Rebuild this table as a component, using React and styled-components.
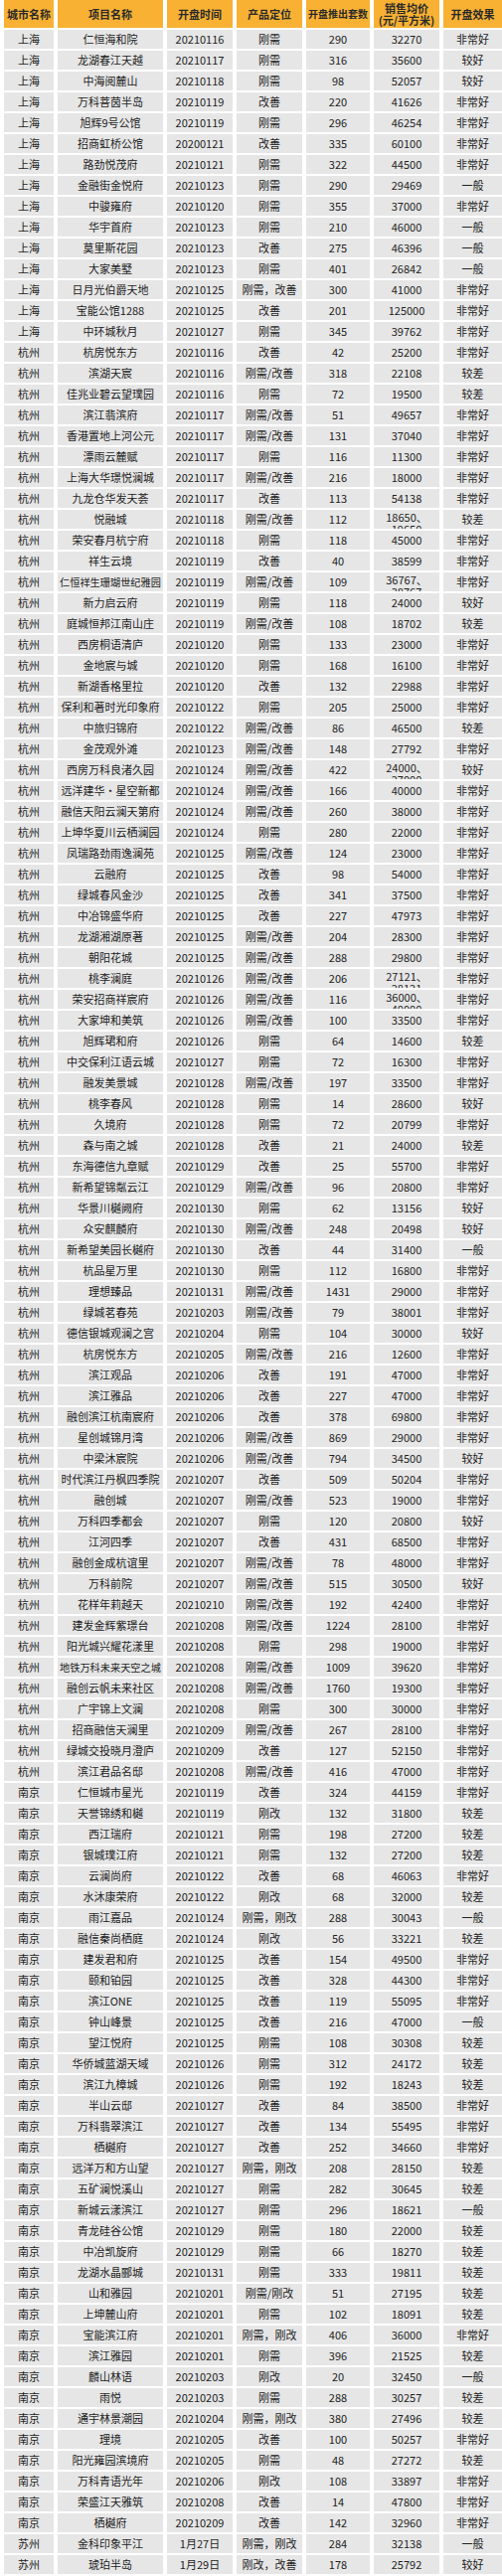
import React from 'react'
import styled, { createGlobalStyle } from 'styled-components'

const GlobalStyle = createGlobalStyle`
  html, body {
    margin: 0;
    padding: 0;
    background: #ffffff;
  }
  body {
    font-family: "Noto Sans CJK SC", "Noto Sans", sans-serif;
    color: #222;
  }
`

const COLS = '50px 106px 66px 66px 64px 66px 59px'

const Table = styled.div`
  width: 505px;
  display: flex;
  flex-direction: column;
`

const HeaderRow = styled.div`
  display: grid;
  grid-template-columns: ${COLS};
  column-gap: 4px;
  padding-left: 4px;
  height: 28px;
  margin-bottom: 2px;
`

const HeadCell = styled.div`
  background: #f8b133;
  display: flex;
  align-items: center;
  justify-content: center;
  text-align: center;
  font-size: ${({ $small }) => ($small ? '10px' : '11px')};
  line-height: 12px;
  font-weight: 700;
  color: #2a2a2a;
  white-space: nowrap;
  overflow: hidden;
`

const Row = styled.div`
  display: grid;
  grid-template-columns: ${COLS};
  column-gap: 4px;
  padding-left: 4px;
  height: 19px;
  margin-bottom: 2px;
`

const Cell = styled.div`
  background: #e6e6e6;
  display: flex;
  align-items: ${({ $wrap }) => ($wrap ? 'flex-start' : 'center')};
  justify-content: center;
  text-align: center;
  font-size: ${({ $tight }) => ($tight ? '10.2px' : '11px')};
  line-height: ${({ $wrap }) => ($wrap ? '12px' : '19px')};
  padding-top: ${({ $wrap }) => ($wrap ? '1px' : '0')};
  box-sizing: border-box;
  color: #222;
  white-space: nowrap;
  overflow: hidden;
`

const Lines = styled.span`
  display: block;
`

const raw = `上海,仁恒海和院,20210116,刚需,290,32270,非常好
上海,龙湖春江天越,20210117,刚需,316,35600,较好
上海,中海阅麓山,20210118,刚需,98,52057,较好
上海,万科菩茵半岛,20210119,改善,220,41626,非常好
上海,旭辉9号公馆,20210119,刚需,296,46254,非常好
上海,招商虹桥公馆,20200121,改善,335,60100,非常好
上海,路劲悦茂府,20210121,刚需,322,44500,非常好
上海,金融街金悦府,20210123,刚需,290,29469,一般
上海,中骏雍府,20210120,刚需,355,37000,非常好
上海,华宇首府,20210123,刚需,210,46000,一般
上海,莫里斯花园,20210123,改善,275,46396,一般
上海,大家美墅,20210123,刚需,401,26842,一般
上海,日月光伯爵天地,20210125,刚需，改善,300,41000,非常好
上海,宝能公馆1288,20210125,改善,201,125000,非常好
上海,中环城秋月,20210127,刚需,345,39762,非常好
杭州,杭房悦东方,20210116,改善,42,25200,非常好
杭州,滨湖天宸,20210116,刚需/改善,318,22108,较差
杭州,佳兆业碧云望璞园,20210116,刚需,72,19500,较差
杭州,滨江翡滨府,20210117,刚需/改善,51,49657,非常好
杭州,香港置地上河公元,20210117,刚需/改善,131,37040,非常好
杭州,漂雨云麓赋,20210117,刚需,116,11300,非常好
杭州,上海大华璟悦澜城,20210117,刚需/改善,216,18000,非常好
杭州,九龙仓华发天荟,20210117,改善,113,54138,非常好
杭州,悦融城,20210118,刚需/改善,112,18650、|19650,较差
杭州,荣安春月杭宁府,20210118,刚需,118,45000,非常好
杭州,祥生云境,20210119,改善,40,38599,非常好
杭州,仁恒祥生珊瑚世纪雅园,20210119,刚需/改善,109,36767、|38767,非常好
杭州,新力启云府,20210119,刚需,118,24000,较好
杭州,庭城恒邦江南山庄,20210119,刚需/改善,108,18702,较差
杭州,西房桐语清庐,20210120,刚需,133,23000,非常好
杭州,金地宸与城,20210120,刚需,168,16100,非常好
杭州,新湖香格里拉,20210120,改善,132,22988,非常好
杭州,保利和著时光印象府,20210122,刚需,205,25000,非常好
杭州,中旅归锦府,20210122,刚需/改善,86,46500,较差
杭州,金茂观外滩,20210123,刚需/改善,148,27792,非常好
杭州,西房万科良渚久园,20210124,刚需/改善,422,24000、|27000,较好
杭州,远洋建华·星空新都,20210124,刚需/改善,166,40000,非常好
杭州,融信天阳云澜天第府,20210124,刚需/改善,260,38000,非常好
杭州,上坤华夏川云栖澜园,20210124,刚需,280,22000,非常好
杭州,凤瑞路劲雨逸澜苑,20210125,刚需/改善,124,23000,非常好
杭州,云融府,20210125,改善,98,54000,非常好
杭州,绿城春风金沙,20210125,改善,341,37500,非常好
杭州,中冶锦盛华府,20210125,改善,227,47973,非常好
杭州,龙湖湘湖原著,20210125,刚需/改善,204,28300,非常好
杭州,朝阳花城,20210125,刚需/改善,288,29800,非常好
杭州,桃李澜庭,20210126,刚需/改善,206,27121、|28121,非常好
杭州,荣安招商祥宸府,20210126,刚需/改善,116,36000、|40000,非常好
杭州,大家坤和美筑,20210126,刚需/改善,100,33500,非常好
杭州,旭辉珺和府,20210126,刚需,64,14600,较差
杭州,中交保利江语云城,20210127,刚需,72,16300,非常好
杭州,融发美景城,20210128,刚需/改善,197,33500,非常好
杭州,桃李春风,20210128,刚需,14,28600,较好
杭州,久境府,20210128,刚需,72,20799,非常好
杭州,森与南之城,20210128,改善,21,24000,较差
杭州,东海德信九章赋,20210129,改善,25,55700,非常好
杭州,新希望锦粼云江,20210129,刚需/改善,96,20800,非常好
杭州,华景川樾阙府,20210130,刚需,62,13156,较好
杭州,众安麒麟府,20210130,刚需/改善,248,20498,较好
杭州,新希望美园长樾府,20210130,改善,44,31400,一般
杭州,杭品星万里,20210130,刚需,112,16800,非常好
杭州,理想臻品,20210131,刚需/改善,1431,29000,非常好
杭州,绿城茗春苑,20210203,刚需/改善,79,38001,非常好
杭州,德信银城观澜之宫,20210204,刚需,104,30000,较好
杭州,杭房悦东方,20210205,刚需/改善,216,12600,非常好
杭州,滨江观品,20210206,改善,191,47000,非常好
杭州,滨江雅品,20210206,改善,227,47000,非常好
杭州,融创滨江杭南宸府,20210206,改善,378,69800,非常好
杭州,星创城锦月湾,20210206,刚需/改善,869,29000,非常好
杭州,中梁沐宸院,20210206,刚需/改善,794,34500,较好
杭州,时代滨江丹枫四季院,20210207,改善,509,50204,非常好
杭州,融创城,20210207,刚需/改善,523,19000,非常好
杭州,万科四季都会,20210207,刚需,120,20800,较好
杭州,江河四季,20210207,改善,431,68500,非常好
杭州,融创金成杭谊里,20210207,刚需/改善,78,48000,非常好
杭州,万科前院,20210207,刚需/改善,515,30500,较好
杭州,花样年莉越天,20210210,刚需/改善,192,42400,非常好
杭州,建发金辉紫璟台,20210208,刚需/改善,1224,28100,非常好
杭州,阳光城兴耀花漾里,20210208,刚需,298,19000,非常好
杭州,地铁万科未来天空之城,20210208,刚需/改善,1009,39620,非常好
杭州,融创云帆未来社区,20210208,刚需/改善,1760,19300,非常好
杭州,广宇锦上文澜,20210208,刚需,300,30000,非常好
杭州,招商融信天澜里,20210209,刚需/改善,267,28100,非常好
杭州,绿城交投晓月澄庐,20210209,改善,127,52150,非常好
杭州,滨江君品名邸,20210208,刚需/改善,416,47000,非常好
南京,仁恒城市星光,20210119,改善,324,44159,非常好
南京,天誉锦绣和樾,20210119,刚改,132,31800,较差
南京,西江瑞府,20210121,刚需,198,27200,较差
南京,银城璞江府,20210121,刚需,132,27200,较差
南京,云澜尚府,20210122,改善,68,46063,非常好
南京,水沐康荣府,20210122,刚改,68,32000,较差
南京,雨江嘉品,20210124,刚需，刚改,288,30043,一般
南京,融信秦尚栖庭,20210124,刚改,56,33221,较差
南京,建发君和府,20210125,改善,154,49500,非常好
南京,颐和铂园,20210125,改善,328,44300,非常好
南京,滨江ONE,20210125,改善,119,55095,非常好
南京,钟山峰景,20210125,改善,216,47000,一般
南京,望江悦府,20210125,刚需,108,30308,较差
南京,华侨城蓝湖天域,20210126,刚需,312,24172,较差
南京,滨江九樟城,20210126,刚需,192,18243,较差
南京,半山云邸,20210127,改善,84,38500,非常好
南京,万科翡翠滨江,20210127,改善,134,55495,非常好
南京,栖樾府,20210127,改善,252,34660,非常好
南京,远洋万和方山望,20210127,刚需，刚改,208,28150,较差
南京,五矿澜悦溪山,20210127,刚需,282,30645,较差
南京,新城云漾滨江,20210127,刚需,296,18621,一般
南京,青龙硅谷公馆,20210129,刚需,180,22000,较差
南京,中冶凯旋府,20210129,刚需,66,18270,较差
南京,龙湖水晶郦城,20210131,刚需,333,19811,较差
南京,山和雅园,20210201,刚需/刚改,51,27195,较差
南京,上坤麓山府,20210201,刚需,102,18091,较差
南京,宝能滨江府,20210201,刚需，刚改,406,36000,非常好
南京,滨江雅园,20210201,刚需,396,21525,较差
南京,麟山林语,20210203,刚改,20,32450,一般
南京,雨悦,20210203,刚需,288,30257,较差
南京,通宇林景潮园,20210204,刚需，刚改,380,27496,较差
南京,理境,20210205,改善,100,50257,非常好
南京,阳光雍园滨境府,20210205,刚需,48,27272,较差
南京,万科青语光年,20210206,刚改,108,33897,非常好
南京,荣盛江天雅筑,20210208,改善,14,47800,非常好
南京,栖樾府,20210209,改善,142,32960,非常好
苏州,金科印象平江,1月27日,刚需，刚改,284,32138,一般
苏州,琥珀半岛,1月29日,刚改，改善,178,25792,较好`

const rows = raw.split('\n').map((line) => line.split(','))

const headers = ['城市名称', '项目名称', '开盘时间', '产品定位', '开盘推出套数', '销售均价|(元/平方米)', '开盘效果']

const renderText = (text) => {
  if (!text.includes('|')) return text
  return text.split('|').map((part, i) => <Lines key={i}>{part}</Lines>)
}

const App = () => {
  return (
    <>
      <GlobalStyle />
      <Table>
        <HeaderRow>
          {headers.map((h) => (
            <HeadCell key={h} $small={h.length === 6}>
              <div>{renderText(h)}</div>
            </HeadCell>
          ))}
        </HeaderRow>
        {rows.map((row, i) => (
          <Row key={i}>
            {row.map((value, j) => (
              <Cell
                key={j}
                $wrap={value.includes('|')}
                $tight={j === 1 && value.length >= 10}
              >
                {value.includes('|') ? <div>{renderText(value)}</div> : value}
              </Cell>
            ))}
          </Row>
        ))}
      </Table>
    </>
  )
}

export default App
